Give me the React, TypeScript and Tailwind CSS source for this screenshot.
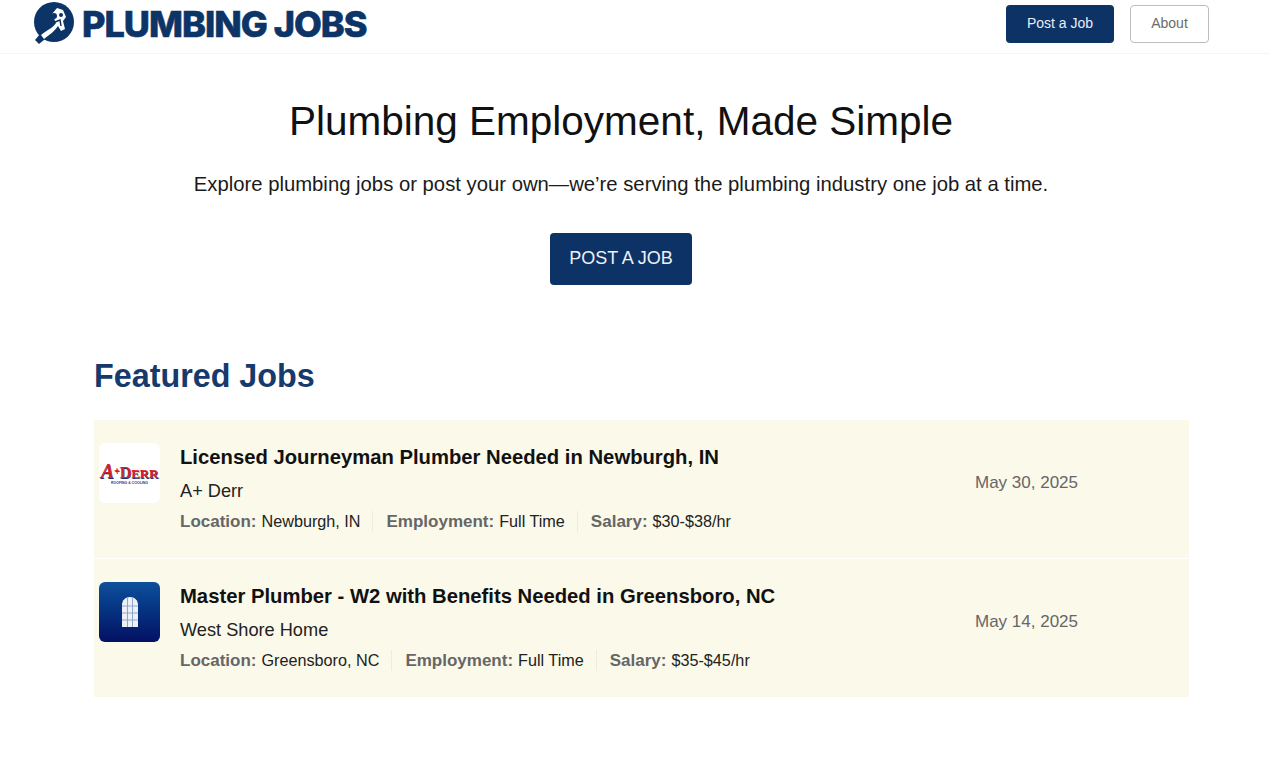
import React from "react";

type Job = {
  title: string;
  company: string;
  location: string;
  employment: string;
  salary: string;
  date: string;
  logo: React.ReactNode;
};

const DerrLogo = () => (
  <div className="h-[60px] w-[61px] shrink-0 rounded-md bg-white flex flex-col items-center justify-center">
    <div className="flex items-baseline text-[#d2232a] font-['Liberation_Serif',serif] font-bold leading-none h-[20px] [text-shadow:0.6px_0.6px_0_#27306f]">
      <span className="text-[20px] italic">A</span>
      <span className="text-[10px] relative -top-1">+</span>
      <span className="text-[16px] tracking-[-0.1px]">D</span>
      <span className="text-[13px] tracking-[-0.1px]">ERR</span>
    </div>
    <div className="text-[3.500px] leading-[4px] font-bold text-[#2c3a86] whitespace-nowrap">ROOFING &amp; COOLING</div>
  </div>
);

const WestShoreLogo = () => (
  <div className="h-[60px] w-[61px] shrink-0 rounded-md bg-gradient-to-b from-[#0f4f9c] to-[#050f63] flex items-center justify-center">
    <svg width="18" height="32" viewBox="0 0 18 32">
      <path d="M1 31V9C1 4 4.500 1 9 1s8 3 8 8v22z" fill="#edf1f7" />
      <path d="M6.500 2v29M11.500 2v29M1 10h16M1 17h16M1 24h16" stroke="#8ea5ca" strokeWidth="1" />
    </svg>
  </div>
);

const jobs: Job[] = [
  {
    title: "Licensed Journeyman Plumber Needed in Newburgh, IN",
    company: "A+ Derr",
    location: "Newburgh, IN",
    employment: "Full Time",
    salary: "$30-$38/hr",
    date: "May 30, 2025",
    logo: <DerrLogo />,
  },
  {
    title: "Master Plumber - W2 with Benefits Needed in Greensboro, NC",
    company: "West Shore Home",
    location: "Greensboro, NC",
    employment: "Full Time",
    salary: "$35-$45/hr",
    date: "May 14, 2025",
    logo: <WestShoreLogo />,
  },
];

const Meta = ({ label, value, last }: { label: string; value: string; last?: boolean }) => (
  <div className={last ? "flex items-baseline gap-[5px]" : "flex items-baseline gap-[5px] pr-3 mr-[13px] border-r border-[#ececdf]"}>
    <span className="font-bold text-[17px] text-[#666666]">{label}:</span>
    <span className="text-[16.200px] text-[#222222]">{value}</span>
  </div>
);

const JobRow = ({ job }: { job: Job }) => (
  <div className="flex h-[138px] items-start bg-[#fbf9ea] pl-[5px]">
    <div className="mt-[23px]">{job.logo}</div>
    <div className="ml-5 w-[795px] pt-[24px]">
      <h3 className="text-[20.250px] leading-[27px] font-bold text-[#111111]">{job.title}</h3>
      <p className="mt-[7px] text-[18.200px] leading-[26px] text-[#222222]">{job.company}</p>
      <div className="mt-[7px] flex leading-[20px]">
        <Meta label="Location" value={job.location} />
        <Meta label="Employment" value={job.employment} />
        <Meta label="Salary" value={job.salary} last />
      </div>
    </div>
    <div className="pt-[52px] text-[17px] leading-[22px] text-[#666666]">{job.date}</div>
  </div>
);

export default function App() {
  return (
    <div className="min-h-[760px] bg-white font-['Liberation_Sans',Arial,sans-serif]">
      <header className="flex h-[54px] items-start justify-between border-b border-[#f5f5f5] pl-[33px] pr-[61px]">
        <div className="flex items-center h-[47px]">
          <svg width="42" height="43" viewBox="0 0 42 43">
            <circle cx="21" cy="20" r="20" fill="#0d3466" />
            <path d="M2 38l4 4 11-9-5-7z" fill="#0d3466" />
            <path d="M8 33C14 28 20 26 23 21l-4-9 5-6 6 2 3 7-3 4 2 8-4 2-3-5C22 29 16 33 11 37z" fill="#fff" />
            <circle cx="21" cy="14" r="3" fill="#0d3466" />
            <circle cx="28" cy="13" r="2" fill="#0d3466" />
            <path d="M22 20l5-2 1 6" stroke="#0d3466" strokeWidth="1.500" fill="none" />
          </svg>
          <span className="ml-[7px] font-['Inter',sans-serif] text-[36px] font-extrabold leading-none tracking-[-1px] text-[#0d3466] [-webkit-text-stroke:0.6px_#0d3466]">
            PLUMBING JOBS
          </span>
        </div>
        <div className="flex items-center gap-4 pt-[5px]">
          <button className="h-[38px] w-[108px] rounded bg-[#0d3266] pb-[2px] text-[14px] text-[#e8edf4]">Post a Job</button>
          <button className="h-[38px] w-[79px] rounded border border-[#bdbdbd] bg-white pb-[2px] text-[14px] text-[#6b6b6b]">About</button>
        </div>
      </header>

      <section className="flex w-[1242px] flex-col items-center pt-[41px]">
        <h1 className="text-[40.500px] leading-[52px] text-[#111111]">Plumbing Employment, Made Simple</h1>
        <p className="mt-[23px] text-[20.300px] leading-[28px] text-[#1a1a1a]">
          Explore plumbing jobs or post your own—we’re serving the plumbing industry one job at a time.
        </p>
        <button className="mt-[35px] h-[52px] w-[142px] rounded bg-[#0d3266] pb-[2px] text-[18px] text-[#eef1f6]">POST A JOB</button>
      </section>

      <section className="mx-[94px] w-[1095px] pt-[70px]">
        <h2 className="text-[32.300px] leading-[42px] font-bold text-[#153a6b]">Featured Jobs</h2>
        <div className="mt-[23px] flex flex-col gap-px">
          {jobs.map((job) => (
            <JobRow key={job.title} job={job} />
          ))}
        </div>
      </section>
    </div>
  );
}
